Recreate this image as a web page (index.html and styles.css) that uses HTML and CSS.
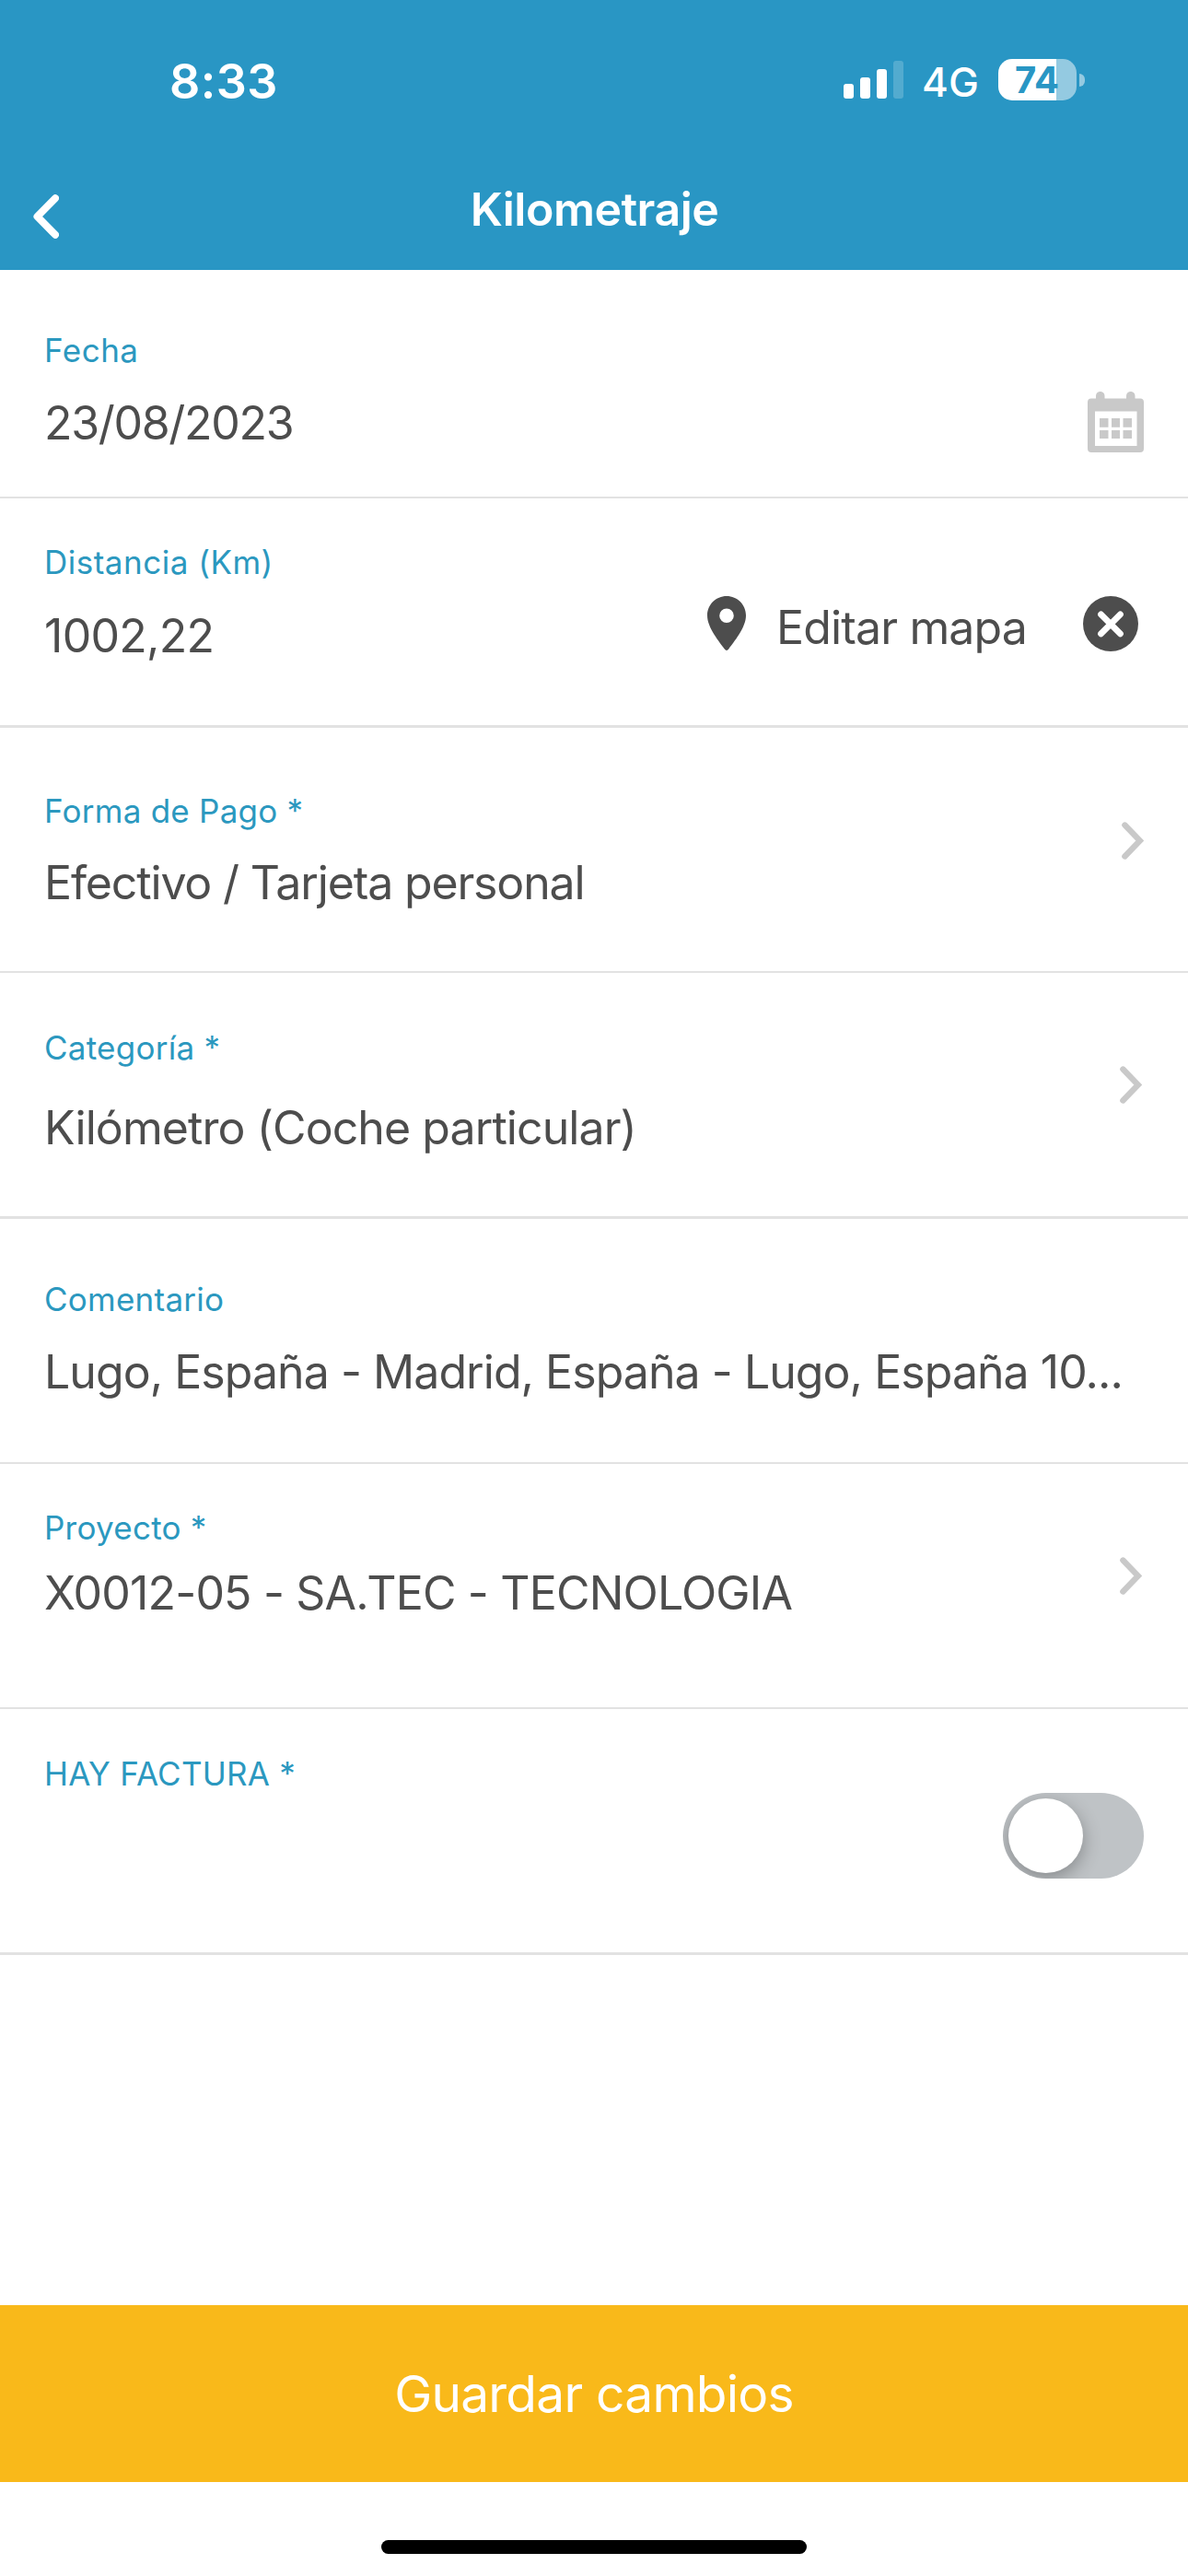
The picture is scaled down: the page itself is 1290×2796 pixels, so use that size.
FILE: index.html
```html
<!DOCTYPE html>
<html lang="es">
<head>
    <meta charset="UTF-8">
    <meta name="viewport" content="width=device-width, initial-scale=1.0">
    <title>Kilometraje</title>
    <link rel="stylesheet" href="styles.css">
</head>
<body>
    <header>
        <div class="status-bar">
            <span class="time">8:33</span>
            <div class="status-icons">
                <svg class="signal" width="65" height="41" viewBox="0 0 65 41" fill="#fff" aria-hidden="true">
                    <rect x="0" y="25" width="11" height="16" rx="3"/>
                    <rect x="18" y="18" width="11" height="23" rx="3"/>
                    <rect x="36" y="9" width="11" height="32" rx="3"/>
                    <rect x="54" y="0" width="11" height="41" rx="3" opacity="0.2"/>
                </svg>
                <span class="network">4G</span>
                <div class="battery">
                    <div class="battery-body">74</div>
                    <div class="battery-tip"></div>
                </div>
            </div>
        </div>
        <nav class="nav-bar">
            <a href="#" class="back" aria-label="Volver">
                <svg width="28" height="48" viewBox="0 0 28 48" fill="none" stroke="#fff" stroke-width="8" stroke-linecap="round" stroke-linejoin="round">
                    <path d="M24 4.2 L4.5 24 L24 43.8"/>
                </svg>
            </a>
            <h1>Kilometraje</h1>
        </nav>
    </header>

    <main>
        <div class="row row-date">
            <div class="field">
                <span class="label">Fecha</span>
                <span class="value">23/08/2023</span>
            </div>
            <svg class="calendar" width="61" height="66" viewBox="0 0 61 66" fill="#c9c9c9" aria-hidden="true">
                <path fill-rule="evenodd" d="M4 7.5 H9 V4.7 A4.7 4.7 0 0 1 18.5 4.7 V7.5 H42 V4.7 A4.7 4.7 0 0 1 51.5 4.7 V7.5 H57 A4 4 0 0 1 61 11.5 V62 A4 4 0 0 1 57 66 H4 A4 4 0 0 1 0 62 V11.5 A4 4 0 0 1 4 7.5 Z M8 21.5 V59 H53.5 V21.5 Z"/>
                <path d="M13 29h9.5v9.7H13z M26 29h9v9.7h-9z M38.5 29H48v9.7h-9.5z M13 42h9.5v9H13z M26 42h9v9h-9z M38.5 42H48v9h-9.5z"/>
            </svg>
        </div>

        <div class="row row-distance">
            <div class="field">
                <span class="label">Distancia (Km)</span>
                <span class="value">1002,22</span>
            </div>
            <div class="map-actions">
                <svg width="42" height="60" viewBox="0 0 42 60" aria-hidden="true">
                    <path fill="#4d4d4d" fill-rule="evenodd" d="M21 0 C9.4 0 0 9.3 0 21 C0 34.5 13.5 50 18.6 57.3 Q21 60.5 23.4 57.3 C28.5 50 42 34.5 42 21 C42 9.3 32.6 0 21 0 Z M21 13.5 A7.8 7.8 0 1 0 21 29.1 A7.8 7.8 0 1 0 21 13.5 Z"/>
                </svg>
                <a href="#" class="edit-map">Editar mapa</a>
                <svg width="60" height="60" viewBox="0 0 60 60" aria-hidden="true">
                    <circle cx="30" cy="30" r="30" fill="#4d4d4d"/>
                    <path d="M19.5 19.8 L40.5 40.8 M40.5 19.8 L19.5 40.8" stroke="#fff" stroke-width="6.8" stroke-linecap="round"/>
                </svg>
            </div>
        </div>

        <div class="row row-payment">
            <div class="field">
                <span class="label">Forma de Pago *</span>
                <span class="value">Efectivo / Tarjeta personal</span>
            </div>
            <svg class="chevron" width="24" height="41" viewBox="0 0 24 41" aria-hidden="true">
                <path d="M3.4 3.6 L19.8 20.5 L3.4 37.4"/>
            </svg>
        </div>

        <div class="row row-category">
            <div class="field">
                <span class="label">Categoría *</span>
                <span class="value">Kilómetro (Coche particular)</span>
            </div>
            <svg class="chevron" width="24" height="41" viewBox="0 0 24 41" aria-hidden="true">
                <path d="M3.4 3.6 L19.8 20.5 L3.4 37.4"/>
            </svg>
        </div>

        <div class="row row-comment">
            <div class="field">
                <span class="label">Comentario</span>
                <span class="value">Lugo, España - Madrid, España - Lugo, España 10...</span>
            </div>
        </div>

        <div class="row row-project">
            <div class="field">
                <span class="label">Proyecto *</span>
                <span class="value">X0012-05 - SA.TEC - TECNOLOGIA</span>
            </div>
            <svg class="chevron" width="24" height="41" viewBox="0 0 24 41" aria-hidden="true">
                <path d="M3.4 3.6 L19.8 20.5 L3.4 37.4"/>
            </svg>
        </div>

        <div class="row row-invoice">
            <div class="field">
                <span class="label">HAY FACTURA *</span>
            </div>
            <div class="toggle" role="switch" aria-checked="false" aria-label="Hay factura">
                <div class="knob"></div>
            </div>
        </div>
    </main>

    <button class="save-button">Guardar cambios</button>

    <footer>
        <div class="home-indicator"></div>
    </footer>
</body>
</html>
```

FILE: styles.css
```css
:root {
    --primary-color: #2996c4;
    --accent-color: #f9b91a;
    --label-color: #2b98bf;
    --text-color: #4d4d4d;
    --line-color: #e2e2e2;
    --icon-color: #c9c9c9;
}

* {
    box-sizing: border-box;
}

body {
    font-family: Inter, 'Liberation Sans', sans-serif;
    background-color: #fff;
    color: var(--text-color);
    margin: 0;
    display: flex;
    flex-direction: column;
    height: 2796px;
}

/* Header */
header {
    background-color: var(--primary-color);
    color: #fff;
    height: 293px;
}

.status-bar {
    display: flex;
    justify-content: space-between;
    align-items: flex-start;
    height: 197px;
    padding: 59px 112px 0 184px;
}

.time {
    font-size: 52px;
    font-weight: 600;
    line-height: 60px;
    letter-spacing: 0.4px;
}

.status-icons {
    display: flex;
    align-items: flex-start;
}

.signal {
    margin-top: 7px;
    margin-right: 20px;
}

.network {
    font-size: 44px;
    font-weight: 500;
    line-height: 60px;
    width: 62px;
    margin-right: 21px;
}

.battery {
    display: flex;
    align-items: center;
    gap: 3px;
    margin-top: 5px;
}

.battery-body {
    width: 85px;
    height: 45px;
    border-radius: 15px;
    background: linear-gradient(to right, #fff 63px, #94cae1 63px);
    color: var(--primary-color);
    font-size: 40px;
    font-weight: 700;
    line-height: 45px;
    padding-left: 18px;
}

.battery-tip {
    width: 6px;
    height: 14px;
    border-radius: 0 6px 6px 0;
    background-color: #94cae1;
}

.nav-bar {
    display: grid;
    grid-template-columns: 1fr auto 1fr;
    align-items: start;
    padding: 0 35px 0 36px;
}

.back {
    display: flex;
    margin-top: 14px;
}

h1 {
    margin: 0;
    font-size: 50px;
    font-weight: 600;
    line-height: 60px;
    letter-spacing: -0.5px;
}

/* Form rows */
.row {
    display: flex;
    justify-content: space-between;
    align-items: flex-start;
    padding: 0 48px;
    border-bottom: 2px solid var(--line-color);
}

.field {
    display: flex;
    flex-direction: column;
}

.label {
    color: var(--label-color);
    font-size: 35px;
    line-height: 42px;
    letter-spacing: 0.25px;
}

.value,
.edit-map {
    color: var(--text-color);
    font-size: 50px;
    line-height: 60px;
    letter-spacing: -0.92px;
    white-space: nowrap;
    text-decoration: none;
}

.value {
    margin-top: 28px;
}

.chevron {
    flex-shrink: 0;
    fill: none;
    stroke: var(--icon-color);
    stroke-width: 6.4;
    stroke-linecap: round;
}

.row-date {
    height: 248px;
    padding-top: 66px;
}

.row-date .label {
    letter-spacing: 0.5px;
}

.row-date .value {
    letter-spacing: -1.3px;
}

.calendar {
    margin-top: 66px;
}

.row-distance {
    height: 249px;
    padding-top: 48px;
    padding-right: 54px;
    border-bottom-width: 3px;
}

.row-distance .label {
    letter-spacing: 0.5px;
}

.row-distance .value {
    margin-top: 29px;
    letter-spacing: -0.7px;
}

.map-actions {
    display: flex;
    align-items: flex-start;
    margin-top: 58px;
}

.edit-map {
    width: 270px;
    margin: 4px 63px 0 33px;
    letter-spacing: -0.85px;
}

.row-payment {
    height: 266px;
    padding-top: 69px;
}

.row-payment .value {
    margin-top: 27px;
    letter-spacing: -1.15px;
}

.row-payment .chevron {
    margin-top: 33px;
}

.row-category {
    height: 267px;
    padding-top: 60px;
    padding-right: 50px;
    border-bottom-width: 3px;
}

.row-category .value {
    margin-top: 36px;
}

.row-category .chevron {
    margin-top: 41px;
}

.row-comment {
    height: 266px;
    padding-top: 66px;
}

.row-comment .value {
    letter-spacing: -0.95px;
}

.row-project {
    height: 266px;
    padding-top: 48px;
    padding-right: 50px;
}

.row-project .value {
    margin-top: 20px;
    letter-spacing: -0.82px;
}

.row-project .chevron {
    margin-top: 53px;
}

.row-invoice {
    height: 267px;
    padding-top: 49px;
    border-bottom-width: 3px;
}

.toggle {
    width: 153px;
    height: 93px;
    margin-top: 42px;
    padding: 6px;
    border-radius: 47px;
    background-color: #bfc3c6;
    overflow: hidden;
}

.knob {
    width: 81px;
    height: 81px;
    border-radius: 50%;
    background-color: #fff;
    box-shadow: 0 6px 20px rgba(0, 0, 0, 0.3);
}

/* Bottom */
.save-button {
    height: 192px;
    margin-top: auto;
    border: none;
    background-color: var(--accent-color);
    color: #fff;
    font-family: inherit;
    font-size: 55px;
    letter-spacing: -0.75px;
}

footer {
    display: flex;
    justify-content: center;
    height: 102px;
    padding-top: 63px;
}

.home-indicator {
    width: 462px;
    height: 15px;
    border-radius: 8px;
    background-color: #000;
}
```
